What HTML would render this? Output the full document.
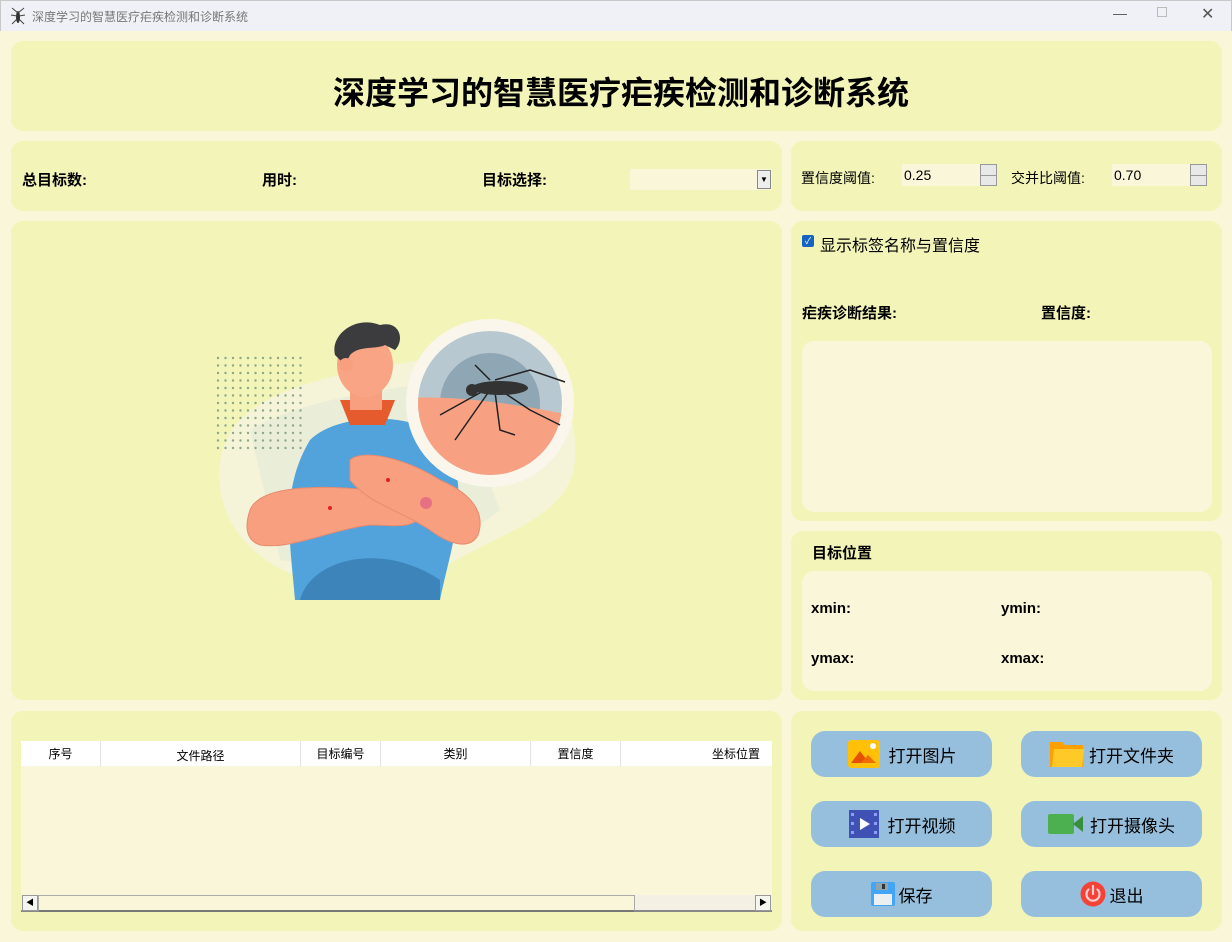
<!DOCTYPE html>
<html><head><meta charset="utf-8"><style>
*{margin:0;padding:0;box-sizing:border-box}
body{width:1232px;height:942px;background:#faf6d9;font-family:"Liberation Sans","Noto Sans CJK SC",sans-serif;position:relative;overflow:hidden;color:#000}
.tb{position:absolute;left:0;top:0;width:1232px;height:31px;background:#eff1f6;border:1px solid #c8c8c8;border-bottom:none}
.tb span{position:absolute;left:31px;top:7px;font-size:12px;color:#777}
.p{position:absolute;background:#f2f4b8;border-radius:12px}
.in{position:absolute;background:#faf6d9;border-radius:12px}
.t{position:absolute;font-size:15px;font-weight:bold;white-space:nowrap}
.n{position:absolute;font-size:14px;white-space:nowrap}
.spin{position:absolute;height:22px;background:#faf6d9;font-size:14px;padding:3px 0 0 2px}
.sb{position:absolute;right:0;top:0;width:17px;height:22px;background:#e8e8e8;border:1px solid #999}
.sb:after{content:"";position:absolute;left:0;right:0;top:10px;border-top:1px solid #999}
.btn{position:absolute;width:181px;height:46px;background:#95bfdc;border-radius:14px;font-size:17px;display:flex;align-items:center;justify-content:center;gap:4px}
.th{position:absolute;top:741px;height:25px;background:#fff;font-size:12px;text-align:center;line-height:26px;border-right:1px solid #e4e4e4}
</style></head><body>
<div class="tb"><svg style="position:absolute;left:9px;top:6px" width="16" height="18" viewBox="0 0 16 18"><ellipse cx="8" cy="10" rx="2" ry="6" fill="#333"/><path d="M8 6L2 1M8 6L14 1M7 9L1 8M9 9L15 8M7 12L2 17M9 12L14 17" stroke="#444" fill="none"/></svg><span>深度学习的智慧医疗疟疾检测和诊断系统</span>
<span style="left:1112px;top:4px;font-size:14px;color:#555">—</span><span style="left:1156px;top:6px;width:10px;height:10px;border:1px solid #bbb"></span><span style="left:1200px;top:3px;font-size:16px;color:#555">✕</span></div>
<div class="p" style="left:11px;top:41px;width:1211px;height:90px"></div>
<div class="t" style="left:0;width:1242px;text-align:center;top:68px;font-size:32px">深度学习的智慧医疗疟疾检测和诊断系统</div>

<div class="p" style="left:11px;top:141px;width:771px;height:70px"></div>
<div class="t" style="left:22px;top:169px">总目标数:</div>
<div class="t" style="left:262px;top:169px">用时:</div>
<div class="t" style="left:482px;top:169px">目标选择:</div>
<div style="position:absolute;left:630px;top:169px;width:142px;height:21px;background:#faf6d9"><div style="position:absolute;right:1px;top:1px;width:14px;height:19px;background:#eee;border:1px solid #888;font-size:8px;text-align:center;line-height:18px">▼</div></div>

<div class="p" style="left:791px;top:141px;width:431px;height:70px"></div>
<div class="n" style="left:801px;top:168px">置信度阈值:</div>
<div class="spin" style="left:902px;top:164px;width:95px">0.25<div class="sb"></div></div>
<div class="n" style="left:1011px;top:168px">交并比阈值:</div>
<div class="spin" style="left:1112px;top:164px;width:95px">0.70<div class="sb"></div></div>

<div class="p" style="left:11px;top:221px;width:771px;height:479px"></div>
<svg style="position:absolute;left:200px;top:310px" width="390" height="300" viewBox="0 0 390 300">
<defs><pattern id="d" width="7.5" height="7.5" patternUnits="userSpaceOnUse"><circle cx="3" cy="3" r="1.2" fill="#8ca88a"/></pattern></defs>
<path d="M40 110C90 60 200 60 260 40C330 20 380 80 375 150C370 210 300 220 240 260C160 300 60 270 30 210C10 170 20 130 40 110Z" fill="#f5f4d8"/>
<path d="M50 120C100 90 180 80 250 70L300 200C250 240 160 260 80 250Z" fill="#e6ebd8" opacity=".7"/>
<rect x="12" y="45" width="92" height="95" fill="url(#d)"/>
<path d="M95 290C90 230 80 180 110 130C140 100 230 100 250 140C270 190 250 240 240 290Z" fill="#52a3db"/>
<path d="M100 290C110 250 180 230 240 270L240 290Z" fill="#3d84bb"/>
<path d="M140 90L150 115L185 115L195 90Z" fill="#e55b2d"/>
<rect x="150" y="60" width="32" height="40" fill="#f79f7f"/>
<ellipse cx="165" cy="55" rx="28" ry="32" fill="#f9a585"/>
<path d="M135 45C130 25 155 5 180 15C200 10 205 30 195 40L185 35C175 40 160 35 150 45L145 55Z" fill="#3c3c3e"/>
<circle cx="146" cy="55" r="7" fill="#f79f7f"/>
<path d="M50 200C60 175 120 175 170 180C200 182 220 190 220 205C215 220 190 215 170 215C130 220 90 240 60 235C45 230 45 215 50 200Z" fill="#f79f7f" stroke="#e88a6f"/>
<path d="M150 150C160 140 200 145 240 170C275 185 285 205 278 225C270 240 250 235 230 220C200 200 170 195 150 170Z" fill="#f79f7f" stroke="#e88a6f"/>
<circle cx="226" cy="193" r="6" fill="#e77182"/><circle cx="130" cy="198" r="2" fill="#d22"/><circle cx="188" cy="170" r="2" fill="#d22"/>
<circle cx="290" cy="93" r="84" fill="#faf6ec"/>
<clipPath id="c"><circle cx="290" cy="93" r="72"/></clipPath>
<g clip-path="url(#c)"><rect x="210" y="20" width="160" height="150" fill="#b8c8d0"/><circle cx="290" cy="93" r="50" fill="#8fa6b4"/><path d="M210 88C260 85 320 95 370 105L370 170L210 170Z" fill="#f8a182"/></g>
<g stroke="#222" stroke-width="1.5" fill="none"><path d="M285 80L240 105M290 80L255 130M295 82L300 120L315 125M300 80L330 100L360 115M290 70L275 55M295 70L330 60L365 72"/></g>
<ellipse cx="300" cy="78" rx="28" ry="7" fill="#333"/><circle cx="272" cy="80" r="6" fill="#333"/>
</svg>

<div class="p" style="left:791px;top:221px;width:431px;height:300px"></div>
<div style="position:absolute;left:802px;top:235px;width:12px;height:12px;background:#1565c0;border-radius:2px;color:#fff;font-size:9px;text-align:center;line-height:12px">✓</div>
<div class="n" style="left:820px;top:232px;font-size:16px">显示标签名称与置信度</div>
<div class="t" style="left:802px;top:302px">疟疾诊断结果:</div>
<div class="t" style="left:1041px;top:302px">置信度:</div>
<div class="in" style="left:802px;top:341px;width:410px;height:171px"></div>

<div class="p" style="left:791px;top:531px;width:431px;height:169px"></div>
<div class="t" style="left:812px;top:542px">目标位置</div>
<div class="in" style="left:802px;top:571px;width:410px;height:120px"></div>
<div class="t" style="left:811px;top:600px">xmin:</div>
<div class="t" style="left:1001px;top:600px">ymin:</div>
<div class="t" style="left:811px;top:650px">ymax:</div>
<div class="t" style="left:1001px;top:650px">xmax:</div>

<div class="p" style="left:11px;top:711px;width:771px;height:220px"></div>
<div style="position:absolute;left:21px;top:741px;width:751px;height:171px;background:#faf6d9"></div>
<div class="th" style="left:21px;width:80px">序号</div>
<div class="th" style="left:101px;width:200px;line-height:30px">文件路径</div>
<div class="th" style="left:301px;width:80px">目标编号</div>
<div class="th" style="left:381px;width:150px">类别</div>
<div class="th" style="left:531px;width:90px">置信度</div>
<div class="th" style="left:621px;width:151px;text-align:right;padding-right:12px;border:none">坐标位置</div>
<div style="position:absolute;left:21px;top:895px;width:751px;height:17px;background:#f4f1e4;border-bottom:2px solid #888"></div>
<div style="position:absolute;left:22px;top:895px;width:16px;height:16px;border:1px solid #999;background:#f6f6f0;font-size:8px;text-align:center;line-height:14px">◀</div>
<div style="position:absolute;left:38px;top:895px;width:597px;height:17px;background:#faf6d9;border:1px solid #aaa;border-bottom:2px solid #777"></div>
<div style="position:absolute;left:755px;top:895px;width:16px;height:16px;border:1px solid #999;background:#f6f6f0;font-size:8px;text-align:center;line-height:14px">▶</div>

<div class="p" style="left:791px;top:711px;width:431px;height:220px"></div>
<div class="btn" style="left:811px;top:731px"><svg width="34" height="30"><rect x="1" y="1" width="32" height="28" rx="3" fill="#ffc107"/><path d="M4 24L13 12L22 24Z" fill="#e65100"/><path d="M14 24L21 16L29 24Z" fill="#ef6c00"/><circle cx="26" cy="7" r="3" fill="#fff"/></svg><span style="margin-left:4px">打开图片</span></div>
<div class="btn" style="left:1021px;top:731px"><svg width="36" height="30"><path d="M1 3h12l3 3h18v22H1Z" fill="#ffa000"/><path d="M5 10h30l-2 18H3Z" fill="#ffca28"/></svg><span>打开文件夹</span></div>
<div class="btn" style="left:811px;top:801px"><svg width="32" height="30"><rect x="1" y="1" width="30" height="28" fill="#3f51b5"/><path d="M12 9L22 15L12 21Z" fill="#fff"/><g fill="#8c9eff"><rect x="3" y="4" width="3" height="3"/><rect x="3" y="13" width="3" height="3"/><rect x="3" y="22" width="3" height="3"/><rect x="26" y="4" width="3" height="3"/><rect x="26" y="13" width="3" height="3"/><rect x="26" y="22" width="3" height="3"/></g></svg><span style="margin-left:4px">打开视频</span></div>
<div class="btn" style="left:1021px;top:801px"><svg width="36" height="22"><rect x="0" y="1" width="26" height="20" rx="2" fill="#4caf50"/><path d="M25 11L35 3V19Z" fill="#388e3c"/></svg><span style="margin-left:2px">打开摄像头</span></div>
<div class="btn" style="left:811px;top:871px"><svg width="24" height="24"><rect x="0" y="0" width="24" height="24" rx="2" fill="#42a5f5"/><rect x="5" y="1" width="12" height="7" fill="#90a4ae"/><rect x="11" y="2" width="3" height="5" fill="#333"/><rect x="3" y="12" width="18" height="11" fill="#eceff1"/></svg><span>保存</span></div>
<div class="btn" style="left:1021px;top:871px"><svg width="26" height="26"><circle cx="13" cy="13" r="12.5" fill="#f44336"/><path d="M8.5 8.5A6.5 6.5 0 1 0 17.5 8.5M13 5V13" stroke="#ffcdd2" stroke-width="2.2" fill="none" stroke-linecap="round"/></svg><span>退出</span></div>
</body></html>
